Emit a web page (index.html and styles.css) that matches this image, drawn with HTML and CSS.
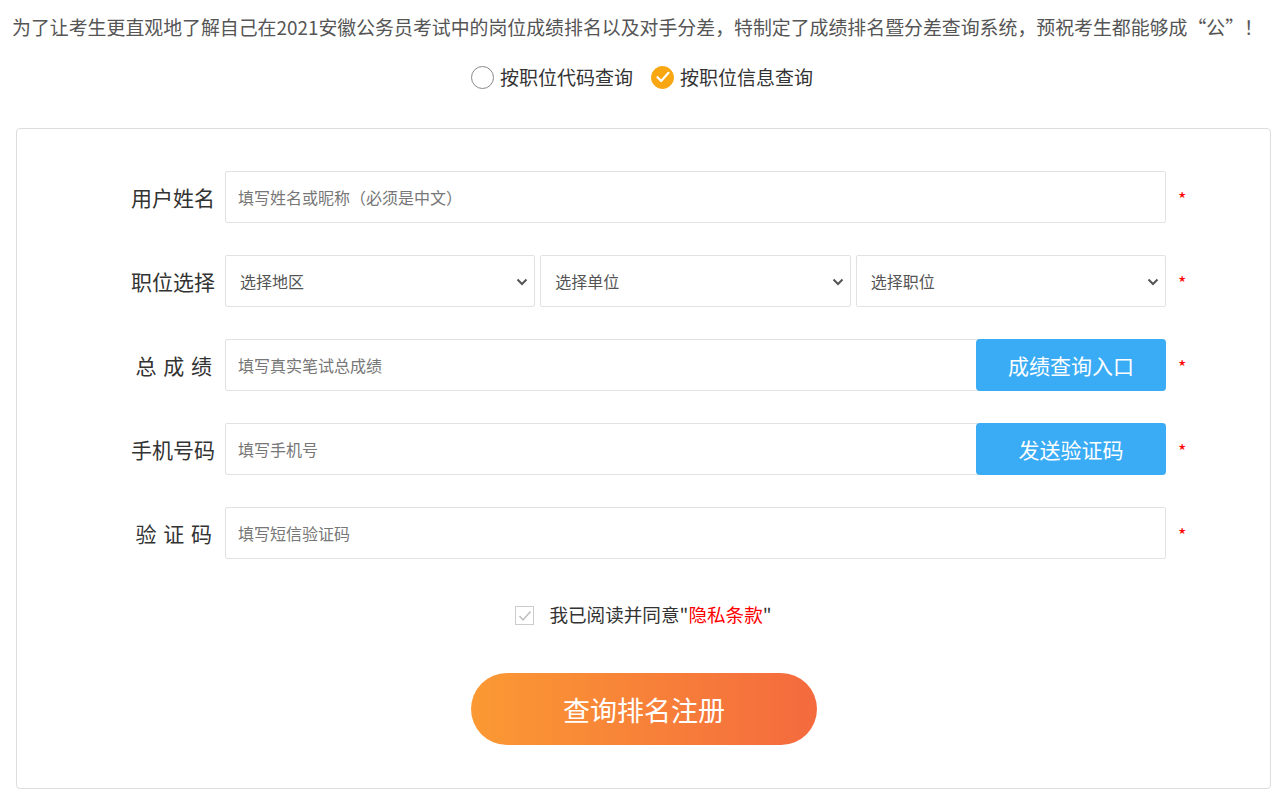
FILE: index.html
```html
<!DOCTYPE html>
<html>
<head>
  <meta charset="utf-8">
  <link rel="stylesheet" href="styles.css">
</head>
<body>
  <p class="intro">为了让考生更直观地了解自己在2021安徽公务员考试中的岗位成绩排名以及对手分差，特制定了成绩排名暨分差查询系统，预祝考生都能够成“公”！</p>

  <!-- query mode -->
  <div class="mode">
    <label class="mode-item">
      <span class="radio"></span>按职位代码查询
    </label>
    <label class="mode-item">
      <span class="radio checked">
        <svg width="14" height="12" viewBox="0 0 14 12"><path d="M1.5 6.2 L5.2 10 L12.5 1.8" fill="none" stroke="#fff" stroke-width="2.2" stroke-linecap="round" stroke-linejoin="round"/></svg>
      </span>按职位信息查询
    </label>
  </div>

  <div class="card">
    <div class="row">
      <span class="label">用户姓名</span>
      <div class="field">
        <input class="text" type="text" placeholder="填写姓名或昵称（必须是中文）">
      </div>
      <span class="star">*</span>
    </div>

    <div class="row">
      <span class="label">职位选择</span>
      <div class="field selects">
        <div class="select-box">
          <select><option>选择地区</option></select>
          <svg class="arrow" width="12" height="8" viewBox="0 0 12 8"><path d="M1.5 1.5 L6 6 L10.5 1.5" fill="none" stroke="#555" stroke-width="2"/></svg>
        </div>
        <div class="select-box">
          <select><option>选择单位</option></select>
          <svg class="arrow" width="12" height="8" viewBox="0 0 12 8"><path d="M1.5 1.5 L6 6 L10.5 1.5" fill="none" stroke="#555" stroke-width="2"/></svg>
        </div>
        <div class="select-box">
          <select><option>选择职位</option></select>
          <svg class="arrow" width="12" height="8" viewBox="0 0 12 8"><path d="M1.5 1.5 L6 6 L10.5 1.5" fill="none" stroke="#555" stroke-width="2"/></svg>
        </div>
      </div>
      <span class="star">*</span>
    </div>

    <div class="row">
      <span class="label spaced">总 成 绩</span>
      <div class="field with-btn">
        <input class="text" type="text" placeholder="填写真实笔试总成绩">
        <button class="side-btn">成绩查询入口</button>
      </div>
      <span class="star">*</span>
    </div>

    <div class="row">
      <span class="label">手机号码</span>
      <div class="field with-btn">
        <input class="text" type="text" placeholder="填写手机号">
        <button class="side-btn">发送验证码</button>
      </div>
      <span class="star">*</span>
    </div>

    <div class="row">
      <span class="label spaced">验 证 码</span>
      <div class="field">
        <input class="text" type="text" placeholder="填写短信验证码">
      </div>
      <span class="star">*</span>
    </div>

    <div class="agree">
      <span class="check">
        <svg width="14" height="12" viewBox="0 0 14 12"><path d="M1.5 6 L5 10 L12.5 1.5" fill="none" stroke="#bbb" stroke-width="1.4"/></svg>
      </span>
      我已阅读并同意"<span class="terms">隐私条款</span>"
    </div>

    <button class="submit">查询排名注册</button>
  </div>
</body>
</html>
```

FILE: styles.css
```css
body {
  margin: 0;
  background-color: #fff;
  color: #333;
  font-family: "Microsoft YaHei", "Noto Sans CJK SC", "Noto Sans", sans-serif;
}

.intro {
  margin: 0;
  padding-top: 15px;
  font-size: 18.9px;
  line-height: 24px;
  color: #555;
  text-align: center;
}

/* radio line */
.mode {
  display: flex;
  justify-content: center;
  gap: 18px;
  margin-top: 25px;
  margin-bottom: 38px;
  margin-left: 9px;
}

.mode-item {
  display: flex;
  align-items: center;
  font-size: 19px;
  line-height: 26px;
  color: #333;
  cursor: pointer;
}

.radio {
  width: 21px;
  height: 21px;
  border: 1.5px solid #888;
  border-radius: 50%;
  margin-right: 6px;
  display: flex;
  align-items: center;
  justify-content: center;
}

.radio.checked {
  background-color: #f8a712;
  border-color: #f8a712;
}

/* form card */
.card {
  margin: 0 4px 10px 16px;
  border: 1px solid #ddd;
  border-radius: 4px;
  padding: 42px 0 43px 0;
}

.row {
  display: flex;
  align-items: center;
  margin-bottom: 32px;
}

.label {
  width: 198px;
  text-align: right;
  font-size: 21px;
  color: #333;
}

.label.spaced {
  word-spacing: 2px;
  box-sizing: border-box;
  padding-right: 3px;
}

.field {
  width: 941px;
  margin-left: 10px;
  height: 52px;
  position: relative;
}

.text {
  box-sizing: border-box;
  width: 100%;
  height: 52px;
  border: 1px solid #e2e2e2;
  border-radius: 2px;
  padding: 0 12px;
  font-size: 16px;
  font-family: inherit;
  color: #333;
  outline: none;
}

.text::placeholder {
  color: #777;
}

.selects {
  display: flex;
  gap: 5px;
}

.select-box {
  position: relative;
  flex: 1;
}

.select-box select {
  appearance: none;
  -webkit-appearance: none;
  box-sizing: border-box;
  width: 100%;
  height: 52px;
  border: 1px solid #e2e2e2;
  border-radius: 2px;
  background-color: #fff;
  padding: 0 14px;
  font-size: 16px;
  font-family: inherit;
  color: #555;
  outline: none;
}

.select-box .arrow {
  position: absolute;
  right: 7px;
  top: 23px;
  pointer-events: none;
}

.side-btn {
  position: absolute;
  right: 0;
  top: 0;
  width: 190px;
  height: 52px;
  border: none;
  border-radius: 4px;
  background-color: #3aacf5;
  color: #fff;
  font-size: 21px;
  font-family: inherit;
  cursor: pointer;
}

.star {
  color: #f00;
  font-size: 18px;
  margin-left: 12px;
  padding-top: 2px;
}

.agree {
  display: flex;
  align-items: center;
  justify-content: center;
  margin-top: 41px;
  font-size: 18.6px;
  color: #333;
}

.check {
  width: 17px;
  height: 17px;
  border: 1px solid #ccc;
  display: flex;
  align-items: center;
  justify-content: center;
  margin-right: 15px;
  margin-top: 4px;
}

.terms {
  color: #f00;
}

.submit {
  display: block;
  margin: 46px auto 0 454px;
  width: 346px;
  height: 72px;
  border: none;
  border-radius: 36px;
  background: linear-gradient(90deg, #fb9933, #f46a3e);
  color: #fff;
  font-size: 27px;
  font-family: inherit;
  cursor: pointer;
}
```
